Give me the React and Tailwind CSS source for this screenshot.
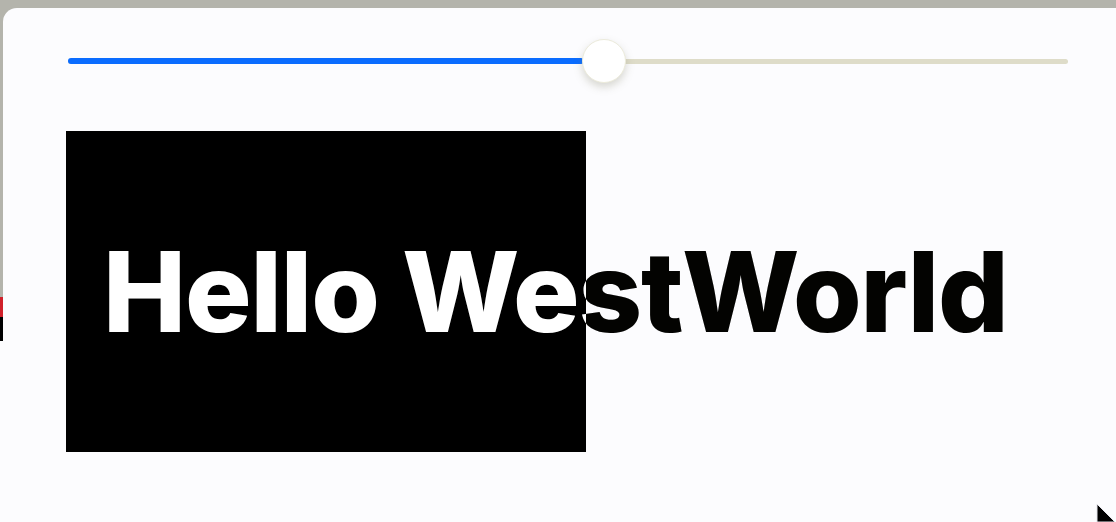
import { useState } from "react";

export default function App() {
  const [value, setValue] = useState(52);

  return (
    <div className="w-[1116px] h-[522px] bg-[#b4b4ac] overflow-hidden flex" style={{ fontFamily: "Inter, 'Liberation Sans', sans-serif" }}>
      {/* left edge sliver */}
      <div className="w-[3px] shrink-0 flex flex-col pt-[297px]">
        <div className="h-[20px] bg-[#d0202a]" />
        <div className="h-[24px] bg-black" />
        <div className="flex-1 bg-[#fcfcfe]" />
      </div>

      <div className="relative flex-1 mt-[8px] bg-[#fcfcfe] rounded-tl-[14px] pl-[65px] pr-[45px] pt-[31px]">
        {/* Slider */}
        <div className="relative h-[44px] w-[1000px] flex items-center">
          <div className="h-[5px] w-full rounded-full bg-[#dedcc9]" />
          <div className="absolute left-0 top-[19px] h-[6px] rounded-full bg-[#0a6cff]" style={{ width: `${value * 10 - 4}px` }} />
          <div
            className="absolute top-0 h-[44px] w-[44px] rounded-full bg-white shadow-[0_4px_8px_rgba(120,120,90,0.28)] border border-[#ecebdc]"
            style={{ left: `${value * 10 - 6}px` }}
          />
          <input
            type="range"
            min="0"
            max="100"
            value={value}
            onChange={(e) => setValue(Number(e.target.value))}
            className="absolute inset-0 opacity-0 cursor-pointer"
          />
        </div>

        {/* Stage */}
        <div className="relative mt-[48px] h-[321px] isolate bg-[#fcfcfe] -ml-[2px]">
          <div className="h-full bg-black" style={{ width: `${value * 10}px` }} />
          <div className="absolute inset-0 flex items-center pl-[37px] pointer-events-none">
            <h1 className="text-white mix-blend-difference text-[111px] font-extrabold leading-none tracking-[-0.01em] whitespace-nowrap">
              Hello WestWorld
            </h1>
          </div>
        </div>

        {/* cursor */}
        <svg className="absolute right-0 bottom-0" width="22" height="18" viewBox="0 0 22 18">
          <path d="M3 0 L3 18 L21 18 Z" fill="black" stroke="#e4e4ea" strokeWidth="1" />
        </svg>
      </div>
    </div>
  );
}
